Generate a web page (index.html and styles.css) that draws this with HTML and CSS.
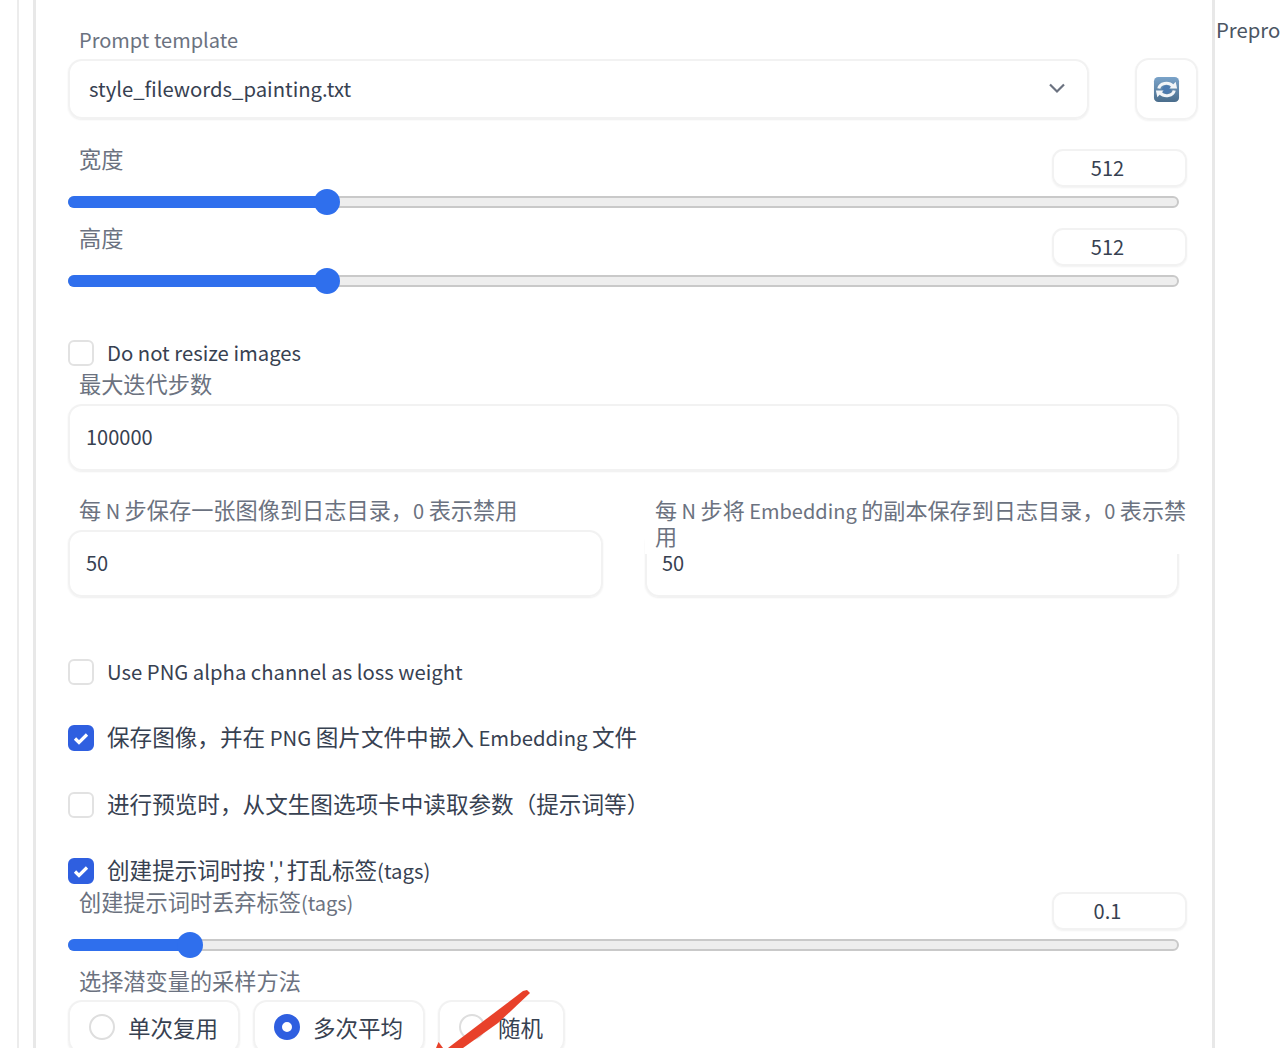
FILE: index.html
```html
<!DOCTYPE html>
<html lang="zh">
<head>
<meta charset="utf-8">
<title>Train</title>
<link rel="stylesheet" href="styles.css">
</head>
<body>
<div class="page">
  <div class="outer">
    <div class="panel">
      <div class="label first"><span class="lat">Prompt template</span></div>
      <div class="select-row">
        <div class="select">
          <span class="lat">style_filewords_painting.txt</span>
          <svg class="chev" width="18" height="12" viewBox="0 0 18 12"><path d="M2 2.500 9 9.500 16 2.500" fill="none" stroke="#6b7280" stroke-width="2.200"/></svg>
        </div>
        <div class="refresh">
          <svg width="27" height="27" viewBox="0 0 28 28">
            <defs><linearGradient id="g" x1="0" y1="0" x2="0" y2="1"><stop offset="0" stop-color="#7aa3c9"/><stop offset="1" stop-color="#4a6d8c"/></linearGradient></defs>
            <rect x="1" y="1" width="26" height="26" rx="4.500" fill="url(#g)"/>
            <circle cx="14" cy="14" r="4.500" fill="#4c7bb0"/>
            <path d="M6 13C7 7.500 16 5.500 20.500 10.500" fill="none" stroke="#f2f5f8" stroke-width="3.200"/>
            <path d="M17 13 25 13 23.500 6Z" fill="#f2f5f8"/>
            <path d="M22 15C21 20.500 12 22.500 7.500 17.500" fill="none" stroke="#f2f5f8" stroke-width="3.200"/>
            <path d="M11 15 3 15 4.500 22Z" fill="#f2f5f8"/>
          </svg>
        </div>
      </div>

      <div class="slider-head s1"><span class="label">宽度</span><div class="num">512</div></div>
      <div class="slider"><div class="fill" style="width:259px"></div><div class="thumb t-size"></div></div>
      <div class="slider-head s2"><span class="label">高度</span><div class="num">512</div></div>
      <div class="slider"><div class="fill" style="width:259px"></div><div class="thumb t-size"></div></div>

      <div class="check c0"><span class="box"></span><span class="txt lat">Do not resize images</span></div>
      <div class="label steps">最大迭代步数</div>
      <div class="input wide">100000</div>

      <div class="two">
        <div class="col">
          <div class="label">每<span class="lat"> N </span>步保存一张图像到日志目录，<span class="lat">0 </span>表示禁用</div>
          <div class="input">50</div>
        </div>
        <div class="col">
          <div class="label wrap">每<span class="lat"> N </span>步将<span class="lat"> Embedding </span>的副本保存到日志目录，<span class="lat">0 </span>表示禁用</div>
          <div class="input tight">50</div>
        </div>
      </div>

      <div class="check c1"><span class="box"></span><span class="txt lat">Use PNG alpha channel as loss weight</span></div>
      <div class="check c2"><span class="box on"><svg width="16" height="13" viewBox="0 0 16 13"><path d="M2 6.500 6 10.500 14 2.500" fill="none" stroke="#fff" stroke-width="3.200"/></svg></span><span class="txt">保存图像，并在<span class="lat"> PNG </span>图片文件中嵌入<span class="lat"> Embedding </span>文件</span></div>
      <div class="check c3"><span class="box"></span><span class="txt">进行预览时，从文生图选项卡中读取参数（提示词等）</span></div>
      <div class="check c2"><span class="box on"><svg width="16" height="13" viewBox="0 0 16 13"><path d="M2 6.500 6 10.500 14 2.500" fill="none" stroke="#fff" stroke-width="3.200"/></svg></span><span class="txt">创建提示词时按<span class="lat tick"> ',' </span>打乱标签<span class="lat">(tags)</span></span></div>

      <div class="slider-head s3"><span class="label">创建提示词时丢弃标签<span class="lat">(tags)</span></span><div class="num">0.1</div></div>
      <div class="slider"><div class="fill" style="width:122px"></div><div class="thumb t-drop"></div></div>

      <div class="label method">选择潜变量的采样方法</div>
      <div class="radios">
        <div class="radio"><span class="dot"></span><span>单次复用</span></div>
        <div class="radio"><span class="dot on"></span><span>多次平均</span></div>
        <div class="radio"><span class="dot"></span><span>随机</span></div>
      </div>
    </div>
    <div class="side">Prepro</div>
  </div>
  <svg class="arrow" width="110" height="60" viewBox="0 0 110 60"><path d="M93 3 97 2 100 5 68 35 33 60 18 60Z" fill="#e8412a"/><path d="M8.500 54 6 60 13 60Z" fill="#e8412a"/></svg>
</div>
</body>
</html>
```
FILE: styles.css
```css
* { box-sizing: border-box; }
html, body { margin: 0; height: 100%; background: #fff; }
body { font-family: "Noto Sans CJK SC", "Noto Sans", sans-serif; color: #374151; font-size: 22px; }
.page { position: relative; width: 1280px; height: 1048px; overflow: hidden; }
.outer { margin-left: 17px; border-left: 2px solid #ececec; height: 1048px; padding-left: 14px; display: flex; }
.panel { width: 1182px; height: 1048px; flex: none; border-left: 3px solid #e8e8e8; border-right: 3px solid #e8e8e8; padding-left: 32px; }
.side { margin-left: 1px; padding-top: 14px; line-height: 30px; font-size: 20.300px; color: #4b5563; white-space: nowrap; }
.lat { font-size: 20.300px; line-height: 1; }
.label { color: #6b7280; font-size: 22.200px; line-height: 26px; padding-left: 11px; display: block; }
.label .lat { font-size: 20px; }
.first { padding-top: 25px; height: 58px; }
.select-row { display: flex; align-items: center; }
.select { width: 1021px; height: 60px; border: 2px solid #f2f2f2; border-radius: 14px; padding: 0 21px 2px 19px; display: flex; align-items: center; justify-content: space-between; box-shadow: 0 1px 2px #eeeeee; }
.refresh { margin-left: 46px; width: 63px; height: 62px; border: 2px solid #f2f2f2; border-radius: 14px; display: flex; align-items: center; justify-content: center; box-shadow: 0 1px 2px #f2f2f2; }
.chev { display: block; }
.slider-head { display: flex; justify-content: space-between; width: 1119px; height: 47px; align-items: flex-start; }
.s1 { margin-top: 29px; }
.s2 { margin-top: 20px; }
.s3 { margin-top: 8px; }
.slider-head .label { margin-top: -4px; }
.num { width: 135px; height: 38px; padding-right: 24px; border: 2px solid #f2f2f2; border-radius: 11px; text-align: center; font-size: 20px; line-height: 34px; box-shadow: 0 1px 2px #f2f2f2; }
.slider { position: relative; width: 1111px; height: 12px; border: 2px solid #c9c9c9; background: #eeeeee; border-radius: 6px; }
.fill { position: absolute; left: -2px; top: -2px; height: 12px; background: #2f6fed; border-radius: 6px; }
.thumb { position: absolute; top: -9px; width: 26px; height: 26px; margin-left: -13px; border-radius: 50%; background: #2f6fed; }
.t-size { left: 257px; }
.t-drop { left: 120px; }
.check { display: flex; align-items: center; gap: 13px; height: 26px; line-height: 26px; white-space: nowrap; font-size: 22.600px; }
.txt { margin-bottom: 3px; }
.txt.lat { line-height: 26px; }
.tick { letter-spacing: -0.900px; }
.box { width: 26px; height: 26px; flex: none; border: 2px solid #e2e2e2; border-radius: 6px; background: #fff; display: flex; align-items: center; justify-content: center; }
.box.on { background: #2f5fe0; border-color: #2f5fe0; }
.c0 { margin-top: 53px; }
.c1 { margin-top: 62px; }
.c2 { margin-top: 40px; }
.c3 { margin-top: 41px; }
.steps { margin-top: 4px; height: 34px; }
.input { height: 67px; border: 2px solid #f2f2f2; border-radius: 14px; padding: 0 16px 2px; display: flex; align-items: center; font-size: 20px; box-shadow: 0 1px 2px #eeeeee; }
.wide { width: 1111px; }
.two { display: grid; grid-template-columns: 535px 534px; column-gap: 42px; width: 1111px; margin-top: 25px; }
.col { position: relative; height: 101px; }
.col .label { height: 33px; }
.col .input { position: absolute; left: 0; right: 0; bottom: 0; }
.col .label.wrap { position: absolute; z-index: 1; top: 0; left: 0; width: 552px; height: 58px; background: #fff; padding-left: 10px; font-size: 22.100px; }
.input.tight { padding: 0 15px 2px; }
.method { margin-top: 16px; height: 33px; }
.radios { display: flex; gap: 13px; }
.radio { height: 54px; padding: 0 20px 0 19px; border: 2px solid #f2f2f2; border-radius: 14px; display: flex; align-items: center; gap: 13px; box-shadow: 0 1px 2px #eeeeee; font-size: 22.500px; }
.dot { width: 26px; height: 26px; border: 2px solid #dedede; border-radius: 50%; flex: none; background: #fff; }
.dot.on { border: 8px solid #2f5fe0; }
.arrow { position: absolute; left: 430px; top: 988px; }
```
